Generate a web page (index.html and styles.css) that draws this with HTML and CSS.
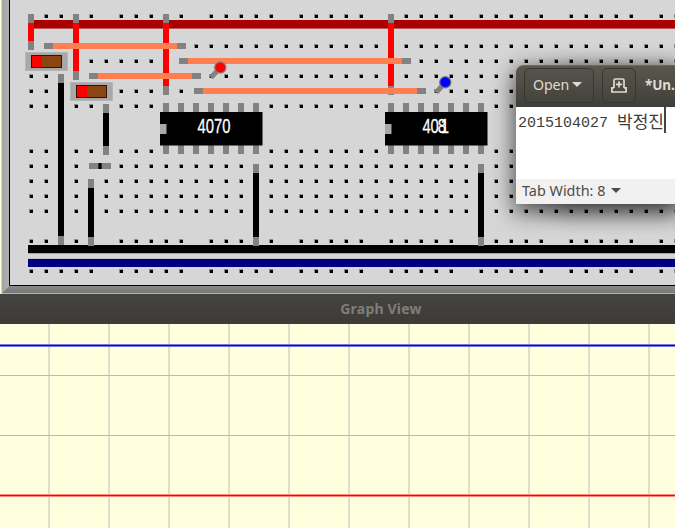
FILE: index.html
```
<!DOCTYPE html>
<html lang="en">
<head>
<meta charset="utf-8">
<title>Breadboard</title>
<link rel="stylesheet" href="styles.css">
</head>
<body>
<main class="desktop">
  <section class="board">
    <svg class="board-canvas" width="675" height="294" viewBox="0 0 675 294">
      <defs>
        <linearGradient id="bevel" x1="0" x2="1"><stop offset="0" stop-color="#a3a3a3"/><stop offset="1" stop-color="#b2b2b2"/></linearGradient>
        <linearGradient id="bevel-bottom" x1="0" x2="0" y1="0" y2="1"><stop offset="0" stop-color="#8a8a8a"/><stop offset="1" stop-color="#777"/></linearGradient>
        <g id="hole"><rect x="-2" y="-2" width="4" height="4" fill="#000" opacity=".35"/><rect x="-1" y="-1" width="3" height="3"/></g>
        <g id="switch">
          <rect x=".5" y=".5" width="42" height="18" fill="#a8a8a8" stroke="#b5b5b5"/>
          <rect x="6.5" y="3.5" width="30" height="12" fill="#8b4513" stroke="#2b1408"/>
          <rect x="7" y="4" width="10" height="11" fill="#f00"/>
        </g>
        <g id="chip">
          <path fill="#828282" d="M3 -9h6v51h-6zM18 -9h6v51h-6zM33 -9h6v51h-6zM48 -9h6v51h-6zM63 -9h6v51h-6zM78 -9h6v51h-6zM93 -9h6v51h-6z"/>
          <rect width="102.5" height="33.5"/>
          <rect x="0" y="12" width="6.5" height="10" fill="#a8a8a8"/>
        </g>
      </defs>
      <rect width="675" height="294" fill="#d6d6d6"/>
      <path fill="#ffffde" d="M0 0h1v294h-1z"/>
      <path fill="#d8d8c4" d="M1 0h1v294h-1z"/>
      <path fill="url(#bevel)" d="M2 0h7v286l-7 7z"/>
      <path fill="url(#bevel-bottom)" d="M9 286h666v7h-673z"/>
      <path fill="#b4b4a2" d="M2 293h673v1h-673z"/>
      <path fill="none" stroke="#000" d="M9.500 0v285.500h665.500"/>
      <g id="holes"></g>
      <rect x="28" y="20" width="647" height="8" fill="#a00"/>
      <rect x="28" y="28" width="647" height="1" fill="#b85b5b"/>
      <rect x="28" y="245" width="647" height="8"/>
      <path fill="#a9a3a6" d="M28 253h647v1h-647z"/>
      <path fill="#bdbdc8" d="M28 258h647v1h-647z"/>
      <rect x="28" y="259" width="647" height="8" fill="#000080"/>
      <g id="wires"></g>
      <use href="#switch" x="25" y="52"/>
      <use href="#switch" x="70" y="82"/>
      <rect x="89" y="163" width="22" height="6" fill="#828282"/>
      <rect x="98" y="163" width="4" height="6" fill="#333"/>
      <rect x="99" y="163" width="2" height="6"/>
      <use href="#chip" x="160" y="112"/>
      <use href="#chip" x="385" y="112"/>
      <g class="chip-label">
        <text transform="translate(197.600 133) scale(.74 1)">4070</text>
        <text transform="translate(422.600 133) scale(.74 1)" x="0 10.800 20.500 24.700">4081</text>
      </g>
      <path stroke="#828282" stroke-width="5" d="M211 77.500L219 69M436 92.500L444 84"/>
      <circle cx="220.300" cy="67.500" r="5.600" fill="#f00" stroke="#808080" stroke-width="1.200"/>
      <circle cx="445.300" cy="82.300" r="5.600" fill="#00f" stroke="#777" stroke-width="1.200"/>
    </svg>
    <aside class="editor">
      <header class="editor-bar">
        <button class="tool open">Open<i class="caret"></i></button>
        <button class="tool save">
          <svg width="16" height="15" viewBox="0 0 16 15"><path fill="none" stroke="#dfdbd2" stroke-width="1.700" d="M3 10V2.500Q3 1 4.500 1h7Q13 1 13 2.500V10M3 9.800H.9V14h14.200V9.800H13M8 3.200v6.300M4.900 6.300h6.200"/></svg>
        </button>
        <b class="doc-name">*Un.</b>
      </header>
      <div class="editor-text"><span class="digits">2015104027</span><span class="korean">박정진</span></div>
      <footer class="editor-status">Tab Width: 8<i class="caret dark"></i></footer>
    </aside>
  </section>
  <header class="graph-title">Graph View</header>
  <section class="graph">
    <svg class="graph-canvas" width="675" height="204" viewBox="0 324 675 204">
      <path stroke="#dedeca" stroke-width="2" d="M49 324v204M109 324v204M169 324v204M229 324v204M289 324v204M349 324v204M409 324v204M469 324v204M529 324v204M589 324v204M649 324v204"/>
      <path stroke="#bcbcac" d="M0 375.500h675M0 435.500h675"/>
      <path stroke="#7777e8" stroke-width="3" d="M0 345.500h675"/>
      <path stroke="#00f" d="M0 345.500h675"/>
      <path stroke="#ff8877" stroke-width="3" d="M0 495.500h675"/>
      <path stroke="#f00" d="M0 495.500h675"/>
    </svg>
  </section>
</main>
<script src="board.js"></script>
</body>
</html>
```
FILE: styles.css
```
* { box-sizing: border-box; }
body { margin: 0; font-family: "Noto Sans", sans-serif; }
.desktop { display: flex; flex-direction: column; width: 675px; height: 528px; overflow: hidden; }
.board { position: relative; height: 294px; overflow: hidden; }
.board-canvas, .graph-canvas { display: block; }
.chip-label { fill: #fff; stroke: #fff; stroke-width: .3px; font: 20px "Liberation Sans", sans-serif; }
.editor {
  position: absolute; left: 516px; top: 65px; width: 159px; height: 139px;
  display: flex; flex-direction: column;
  border-radius: 7px 0 0 0; background: #fff;
  box-shadow: 0 6px 22px 2px rgba(0,0,0,.65), 40px 6px 22px 2px rgba(0,0,0,.3);
}
.editor-bar {
  display: flex; align-items: flex-start; height: 42px; padding: 3px 0 0 8px;
  border-radius: 7px 0 0 0; border-top: 1px solid #6b695e;
  background: linear-gradient(#5a584e, #403e39); color: #dfdbd2;
}
.tool {
  display: flex; align-items: center; justify-content: center; flex: none;
  height: 35px; margin: -1px 0 0; padding: 0; border: 1px solid #37362f; border-radius: 5px;
  background: linear-gradient(#55534a, #45433d);
  color: #dfdbd2; font: 14.2px "Noto Sans", sans-serif;
}
.open { width: 70px; margin-right: 8px; padding: 0 3px 2px 0; letter-spacing: -.1px; }
.save { width: 34px; margin-right: 9px; }
.caret { margin-left: 3px; border: 5px solid transparent; border-top-color: currentColor; border-bottom: 0; }
.caret.dark { margin-left: 6px; }
.doc-name { font-size: 13.5px; line-height: 33px; letter-spacing: -.1px; }
.editor-text { display: flex; height: 72px; padding: 0 0 0 2px; color: #3c3c3c; }
.digits { flex: none; width: 99px; font: 15px/34px "Liberation Mono", monospace; }
.korean { height: 26px; border-right: 2px solid #444; font: 17px/27px "Noto Sans CJK KR", sans-serif; white-space: nowrap; }
.editor-status {
  display: flex; align-items: center; height: 25px; padding: 0 0 2px 6px;
  background: #f2f1f0; color: #4c4c4c; font-size: 14.4px;
}
.graph-title {
  height: 30px; padding-left: 87px; line-height: 30px; text-align: center;
  background: linear-gradient(#454440, #3c3b37); color: #807d78;
  font-size: 14px; font-weight: 700; letter-spacing: .2px;
}
.graph { height: 204px; background: #ffffde; }
```
FILE: board.js
```
const NS = "http://www.w3.org/2000/svg";
function add(parent, tag, attrs) {
  const el = document.createElementNS(NS, tag);
  for (const key in attrs) el.setAttribute(key, attrs[key]);
  parent.appendChild(el);
}

// Rail rows leave every sixth column empty.
const holes = document.getElementById("holes");
for (const y of [16, 46, 61, 76, 91, 106, 151, 166, 181, 196, 211, 241, 271]) {
  const rail = y === 16 || y === 241 || y === 271;
  for (let col = 0; col < 44; col++) {
    if (rail && col % 6 === 5) continue;
    add(holes, "use", { href: "#hole", x: 31 + col * 15, y });
  }
}

// Each wire: x, y, width, height, colour; bare ends are 9px long.
const wires = document.getElementById("wires");
const list = [
  [28, 14, 6, 36, "#f00"], [73, 14, 6, 66, "#f00"], [163, 14, 6, 81, "#f00"], [388, 14, 6, 81, "#f00"],
  [44, 43, 142, 6, "#ff7f50"], [89, 73, 112, 6, "#ff7f50"], [179, 58, 232, 6, "#ff7f50"], [194, 88, 232, 6, "#ff7f50"],
  [58, 74, 6, 171, "#000"], [103, 104, 6, 51, "#000"], [88, 179, 6, 67, "#000"], [253, 164, 6, 82, "#000"], [478, 164, 6, 82, "#000"]
];
for (const [x, y, width, height, fill] of list) {
  add(wires, "rect", { x, y, width, height, fill: "#828282" });
  if (width > height) add(wires, "rect", { x: x + 9, y, width: width - 18, height, fill });
  else add(wires, "rect", { x, y: y + 9, width, height: height - 18, fill });
}
```
